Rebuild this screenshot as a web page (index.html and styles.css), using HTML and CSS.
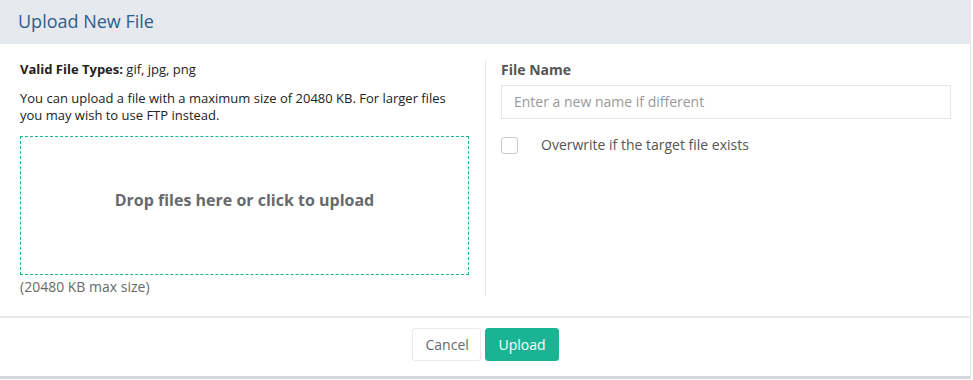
FILE: index.html
```html
<!DOCTYPE html>
<html>
<head>
<meta charset="utf-8">
<link rel="stylesheet" href="styles.css">
</head>
<body>
<div class="modal">
  <div class="modal-header">
    <h4 class="modal-title">Upload New File</h4>
  </div>
  <div class="modal-body">
    <div class="col col-left">
      <p class="types"><strong>Valid File Types:</strong> gif, jpg, png</p>
      <p class="info">You can upload a file with a maximum size of 20480 KB. For larger files you may wish to use FTP instead.</p>
      <div class="dropzone">Drop files here or click to upload</div>
      <div class="maxsize">(20480 KB max size)</div>
    </div>
    <div class="col col-right">
      <label class="field-label">File Name</label>
      <input class="input" type="text" placeholder="Enter a new name if different">
      <div class="check-row">
        <span class="checkbox"></span>
        <span class="check-label">Overwrite if the target file exists</span>
      </div>
    </div>
  </div>
  <div class="modal-footer">
    <button class="btn btn-white">Cancel</button>
    <button class="btn btn-primary">Upload</button>
  </div>
</div>
</body>
</html>
```
FILE: styles.css
```css
* { box-sizing: border-box; }
html, body { margin: 0; padding: 0; background: #fff; }
body { font-family: "Open Sans", "Liberation Sans", sans-serif; color: #222; font-size: 13px; }
.modal { width: 971px; border-right: 1px solid #e3e5e8; background: #fff; }
.modal-header { background: #e6e9ed; height: 44px; padding: 0 18px; display: flex; align-items: center; }
.modal-title { margin: 0; font-size: 18px; font-weight: 400; color: #2f5d8e; line-height: 24px; padding-bottom: 3px; }
.modal-body { display: flex; padding: 16px 20px 20px 20px; border-bottom: 2px solid #e7e9ec; border-top-left-radius: 3px; background: #fff; }
.col-left { width: 467px; padding-right: 16px; border-right: 1px solid #e7eaec; }
.col-right { width: 464px; padding-left: 15px; }
.types { margin: 1px 0 0; line-height: 17px; }
.types strong { font-weight: 700; }
.info { margin: 12px 0 0; line-height: 17px; }
.dropzone { margin-top: 12px; height: 139px; padding-bottom: 12px; border: 1px dashed #1ab394; display: flex; align-items: center; justify-content: center; font-size: 16px; font-weight: 700; color: #676a6c; }
.maxsize { font-size: 14px; line-height: 19px; color: #676a6c; margin-top: 2px; }
.field-label { display: block; font-weight: 700; font-size: 14px; color: #555; line-height: 20px; margin-top: 0; }
.input { display: block; width: 450px; height: 34px; margin-top: 5px; border: 1px solid #e5e6e7; padding: 5px 12px 7px; font-family: inherit; font-size: 14px; color: #555; outline: none; }
.input::placeholder { color: #999; }
.check-row { display: flex; align-items: center; margin-top: 16px; }
.checkbox { width: 17px; height: 17px; border: 1px solid #ccc; border-radius: 3px; background: #fff; }
.check-label { margin-left: 23px; font-size: 14px; color: #555; line-height: 20px; }
.modal-footer { height: 61px; padding-top: 10px; display: flex; justify-content: center; align-items: flex-start; gap: 4px; border-bottom: 3px solid #d5d9dd; }
.btn { font-family: inherit; font-size: 14px; height: 33px; border-radius: 3px; padding: 0 13px; cursor: pointer; line-height: 20px; }
.btn-white { background: #fff; border: 1px solid #e7eaec; color: #676a6c; width: 69px; }
.btn-primary { background: #1ab394; border: 1px solid #1ab394; color: #fff; width: 74px; }
```
